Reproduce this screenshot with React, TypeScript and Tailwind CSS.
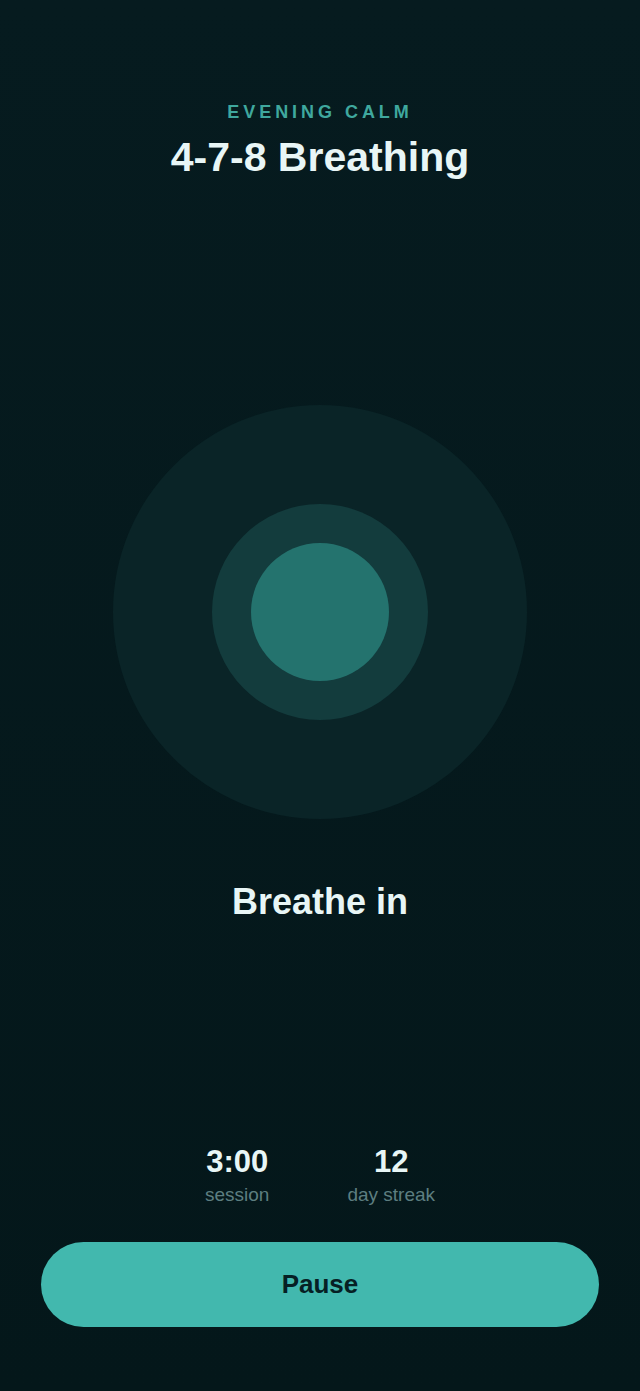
export default function App() {
  return (
    <div
      className="flex min-h-[1391px] w-full flex-col items-center bg-gradient-to-b from-[#061b1f] to-[#04171a] text-[#e8f6f6]"
      style={{ fontFamily: '"Liberation Sans", Arial, sans-serif' }}
    >
      {/* ── Header ───────────────────────────────────────────── */}
      <div className="mt-[103px] text-[18px] font-bold leading-none tracking-[0.22em] text-[#3fa89e]">
        EVENING CALM
      </div>
      <h1 className="mt-[16px] text-[41px] font-bold leading-none">
        4-7-8 Breathing
      </h1>

      {/* ── Breathing rings ──────────────────────────────────── */}
      <div className="mt-[227px] flex h-[414px] w-[414px] items-center justify-center rounded-full bg-[#0a2427]">
        <div className="flex h-[216px] w-[216px] items-center justify-center rounded-full bg-[#133c3d]">
          <div className="h-[138px] w-[138px] rounded-full bg-[#24736e]" />
        </div>
      </div>

      <div className="mt-[65px] text-[36px] font-bold leading-none">
        Breathe in
      </div>

      {/* ── Stats ────────────────────────────────────────────── */}
      <div className="mt-[226px] flex justify-center gap-[78px]">
        <div className="flex flex-col items-center">
          <span className="text-[31px] font-bold leading-none">3:00</span>
          <span className="mt-[8px] text-[19px] leading-none text-[#5d7e80]">
            session
          </span>
        </div>
        <div className="flex flex-col items-center">
          <span className="text-[31px] font-bold leading-none">12</span>
          <span className="mt-[8px] text-[19px] leading-none text-[#5d7e80]">
            day streak
          </span>
        </div>
      </div>

      {/* ── Action ───────────────────────────────────────────── */}
      <div className="mt-[38px] w-full px-[41px]">
        <button className="flex h-[85px] w-full items-center justify-center rounded-full bg-[#42b8ae] text-[26px] font-bold text-[#062024]">
          Pause
        </button>
      </div>
    </div>
  );
}
